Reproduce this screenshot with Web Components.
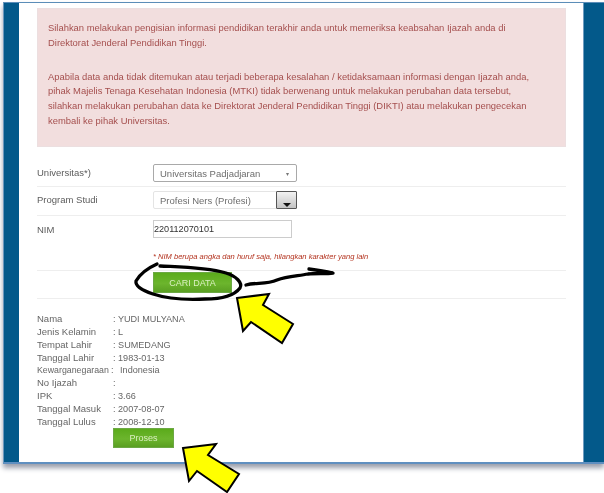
<!DOCTYPE html>
<html>
<head>
<meta charset="utf-8">
<style>
  html, body { margin: 0; padding: 0; background: #fff; overflow: hidden; }
  body { width: 604px; height: 493px; position: relative; font-family: "Liberation Sans", Arial, sans-serif; font-size: 9.5px; color: #555; }
</style>
</head>
<body>
<page-frame>
  <alert-box>
    <p class="first">Silahkan melakukan pengisian informasi pendidikan terakhir anda untuk memeriksa keabsahan Ijazah anda di<br>Direktorat Jenderal Pendidikan Tinggi.</p>
    <p>Apabila data anda tidak ditemukan atau terjadi beberapa kesalahan / ketidaksamaan informasi dengan Ijazah anda,<br>pihak Majelis Tenaga Kesehatan Indonesia (MTKI) tidak berwenang untuk melakukan perubahan data tersebut,<br>silahkan melakukan perubahan data ke Direktorat Jenderal Pendidikan Tinggi (DIKTI) atau melakukan pengecekan<br>kembali ke pihak Universitas.</p>
  </alert-box>
  <form-row label="Universitas*)" height="32" pad="9" label-pad="12"><select-box>Universitas Padjadjaran</select-box></form-row>
  <form-row label="Program Studi" height="29" pad="4" label-pad="7"><select-box variant="dark">Profesi Ners (Profesi)</select-box></form-row>
  <form-row label="NIM" height="55" pad="4" label-pad="8">
    <text-box>220112070101</text-box>
    <hint-text>* NIM berupa angka dan huruf saja, hilangkan karakter yang lain</hint-text>
  </form-row>
  <form-row height="28" pad="1"><green-button width="79" height="21">CARI DATA</green-button></form-row>
  <data-list>
    <data-row label="Nama">YUDI MULYANA</data-row>
    <data-row label="Jenis Kelamin">L</data-row>
    <data-row label="Tempat Lahir">SUMEDANG</data-row>
    <data-row label="Tanggal Lahir">1983-01-13</data-row>
    <data-row label="Kewarganegaraan" tight>Indonesia</data-row>
    <data-row label="No Ijazah"></data-row>
    <data-row label="IPK">3.66</data-row>
    <data-row label="Tanggal Masuk">2007-08-07</data-row>
    <data-row label="Tanggal Lulus">2008-12-10</data-row>
    <green-button width="61" height="20" indent="76" lift="1">Proses</green-button>
  </data-list>
</page-frame>
<scribble-layer></scribble-layer>

<script>
// small helper so every element gets its own open shadow root
function shadow(el, html) {
  el.attachShadow({ mode: 'open' }).innerHTML = html;
}

class PageFrame extends HTMLElement {
  connectedCallback() {
    shadow(this, `
      <style>
        :host { display: flex; margin: 2px 0 0 3px; width: 601px; height: 462px; border-top: 1px solid #5b8db8; border-bottom: 2px solid #5f8fc0; border-left: 1px solid #6a97bd; box-sizing: border-box; box-shadow: 0 4px 5px 0 #9a9fac; }
        .side { background: #03598a; flex: none; }
        .left { width: 15px; }
        .right { width: 20px; border-left: 1px solid #6f9cc0; }
        main { flex: 1; background: #fff; padding: 5px 17px 0 18px; filter: blur(0.5px); }
      </style>
      <div class="side left"></div>
      <main><slot></slot></main>
      <div class="side right"></div>`);
  }
}

class AlertBox extends HTMLElement {
  connectedCallback() {
    shadow(this, `
      <style>
        :host { display: block; background: #f2dede; border: 1px solid #ecdfe0; box-sizing: border-box; height: 139px; padding: 11px 0 0 10px; color: #a54f4e; line-height: 14.7px; white-space: nowrap; font-size: 9.42px; margin-bottom: 8px; }
        ::slotted(p) { margin: 0; }
        ::slotted(p.first) { line-height: 15px; margin-bottom: 19.5px; }
      </style>
      <slot></slot>`);
  }
}

class FormRow extends HTMLElement {
  connectedCallback() {
    const label = this.getAttribute('label') || '';
    const height = this.getAttribute('height');
    const pad = this.getAttribute('pad') || 0;
    const labelPad = this.getAttribute('label-pad') || 0;
    shadow(this, `
      <style>
        :host { display: grid; grid-template-columns: 116px 1fr; height: ${height}px; box-sizing: border-box; border-bottom: 1px solid #eee; }
        .label { padding-top: ${labelPad}px; color: #5c5c5c; font-size: 9.5px; line-height: 12px; }
        .body { display: flex; flex-direction: column; padding-top: ${pad}px; }
      </style>
      <div class="label">${label}</div>
      <div class="body"><slot></slot></div>`);
  }
}

class SelectBox extends HTMLElement {
  connectedCallback() {
    const dark = this.getAttribute('variant') === 'dark';
    shadow(this, `
      <style>
        :host { display: flex; width: 144px; height: 18px; box-sizing: border-box; align-items: center; border: 1px solid ${dark ? '#e4e4e4' : '#a9a9a9'}; border-radius: 2px; padding-left: 6px; color: #6e6e6e; background: #fff; position: relative; }
        .text { flex: 1; }
        .small { margin-right: 7px; font-size: 6px; color: #777; }
        .drop { width: 21px; height: 18px; margin: -1px -1px -1px 0; box-sizing: border-box; border: 1px solid #555; border-radius: 1px; background: linear-gradient(#f2f2f2, #c4c4c4); display: flex; align-items: flex-end; justify-content: center; }
        .drop i { width: 0; height: 0; border: 4px solid transparent; border-top: 4px solid #111; border-bottom: 0; margin-bottom: 1px; }
      </style>
      <span class="text"><slot></slot></span>
      ${dark ? '<span class="drop"><i></i></span>' : '<span class="small">▾</span>'}`);
  }
}

class TextBox extends HTMLElement {
  connectedCallback() {
    shadow(this, `
      <style>
        :host { display: flex; align-items: center; width: 139px; height: 18px; box-sizing: border-box; border: 1px solid #ccc; padding-left: 0; color: #333; font-size: 9.1px; flex: none; }
      </style>
      <slot></slot>`);
  }
}

class HintText extends HTMLElement {
  connectedCallback() {
    shadow(this, `
      <style>
        :host { display: block; margin-top: 14px; font-size: 7.55px; line-height: 9px; font-style: italic; color: #b3321e; }
      </style>
      <slot></slot>`);
  }
}

class GreenButton extends HTMLElement {
  connectedCallback() {
    const w = this.getAttribute('width');
    const h = this.getAttribute('height');
    const indent = this.getAttribute('indent') || 0;
    const lift = this.getAttribute('lift') || 0;
    shadow(this, `
      <style>
        :host { display: flex; align-items: center; justify-content: center; width: ${w}px; height: ${h}px; margin: -${lift}px 0 0 ${indent}px; box-sizing: border-box; background: linear-gradient(#5bab1b, #6cb52d 55%, #5a9f22); border: 1px solid #6ca844; color: #d9efc0; font-size: 9px; }
      </style>
      <slot></slot>`);
  }
}

class DataList extends HTMLElement {
  connectedCallback() {
    shadow(this, `
      <style>
        :host { display: block; padding-top: 14px; }
      </style>
      <slot></slot>`);
  }
}

class DataRow extends HTMLElement {
  connectedCallback() {
    const label = this.getAttribute('label');
    const tight = this.hasAttribute('tight');
    shadow(this, `
      <style>
        :host { display: grid; grid-template-columns: ${tight ? '74px' : '76px'} 1fr; height: 12.85px; line-height: 12.85px; color: #666; white-space: nowrap; }
        .label { font-size: ${tight ? '8.8px' : '9.5px'}; }
        .value { font-size: 9.1px; word-spacing: ${tight ? '4px' : '0'}; }
      </style>
      <div class="label">${label}</div>
      <div class="value">: <slot></slot></div>`);
  }
}

// hand drawn marks on top of the screenshot
class ScribbleLayer extends HTMLElement {
  connectedCallback() {
    shadow(this, `
      <style>
        :host { position: absolute; left: 0; top: 0; width: 604px; height: 493px; pointer-events: none; }
        svg { display: block; }
      </style>
      <svg width="604" height="493" viewBox="0 0 604 493">
        <path d="M157 264 C148 268 140 274 136 281 C135 287 144 291 153 294 C165 298 185 300 205 299 C222 299 234 296 240 288 C243 283 236 276 226 273 C205 267 180 267 160 266"
              fill="none" stroke="#000" stroke-width="3.3" stroke-linecap="round"/>
        <path d="M246 285 C256 282 266 285 277 280 C287 276 298 276 308 274 C316 273 326 274 333 273 C323 271 316 270 309 269"
              fill="none" stroke="#000" stroke-width="3.3" stroke-linecap="round" stroke-linejoin="round"/>
        <path d="M237 298 L269 294 L263 305 L293 324 L282 343 L251 322 L243 331 Z" fill="#ffff00" stroke="#000" stroke-width="2" stroke-linejoin="miter"/>
        <path d="M183 448 L216 444 L208 455 L239 474 L227 492 L197 471 L189 481 Z" fill="#ffff00" stroke="#000" stroke-width="2" stroke-linejoin="miter"/>
      </svg>`);
  }
}

customElements.define('page-frame', PageFrame);
customElements.define('alert-box', AlertBox);
customElements.define('form-row', FormRow);
customElements.define('select-box', SelectBox);
customElements.define('text-box', TextBox);
customElements.define('hint-text', HintText);
customElements.define('green-button', GreenButton);
customElements.define('data-list', DataList);
customElements.define('data-row', DataRow);
customElements.define('scribble-layer', ScribbleLayer);
</script>
</body>
</html>
